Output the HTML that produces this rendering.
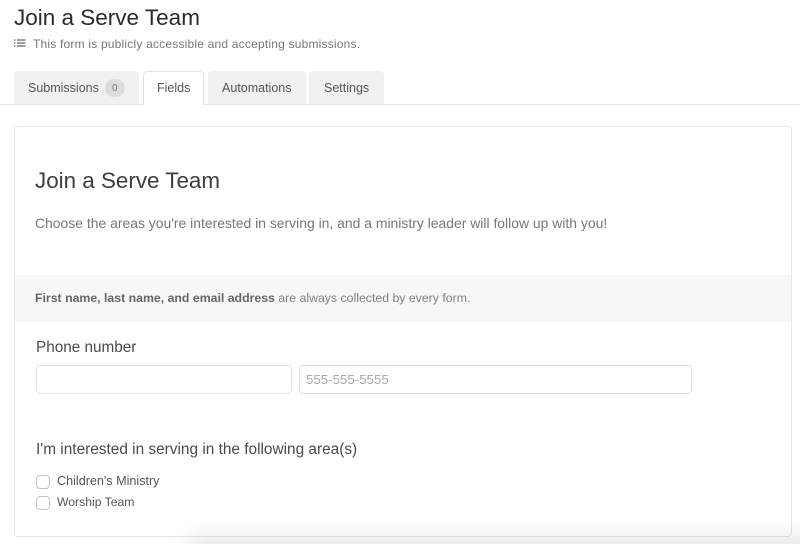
<!DOCTYPE html>
<html><head><meta charset="utf-8"><style>
html,body{margin:0;padding:0;background:#fff;overflow:hidden}
body{width:800px;height:544px}
#w{width:800px;height:544px;overflow:hidden;position:relative;font-family:"Liberation Sans",sans-serif}
.t{position:absolute;white-space:nowrap;line-height:1}
.b{position:absolute;box-sizing:border-box}
.tab{position:absolute;top:71px;height:33px;background:#f1f1f1;border-radius:4px 4px 0 0;box-sizing:border-box}
.tl{font-size:12.5px;color:#555}
</style></head><body><div id="w">
<div class="t" style="left:14px;top:7px;font-size:22.5px;color:#2b2b2b">Join a Serve Team</div>
<svg class="b" style="left:14px;top:39px" width="12" height="9" viewBox="0 0 12 9"><path d="M0 1h1.5M3 1h8.500M0 4h1.500M3 4h8.500M0 7h1.500M3 7h8.500" stroke="#666" stroke-width="1.200" fill="none"/></svg>
<div class="t" style="left:33px;top:38px;font-size:12px;letter-spacing:.2px;color:#777">This form is publicly accessible and accepting submissions.</div>
<div class="b" style="left:0;top:104px;width:800px;height:1px;background:#e4e4e4"></div>
<div class="tab" style="left:14px;width:125px"></div>
<div class="t tl" style="left:28px;top:82px">Submissions</div>
<div class="b" style="left:105px;top:79px;width:20px;height:18px;border-radius:9px;background:#dcdcdc"></div>
<div class="t" style="left:112px;top:84px;font-size:10px;color:#777">0</div>
<div class="tab" style="left:143px;width:61px;height:34px;background:#fff;border:1px solid #e4e4e4;border-bottom:0"></div>
<div class="t tl" style="left:157px;top:82px">Fields</div>
<div class="tab" style="left:208px;width:98px"></div>
<div class="t tl" style="left:222px;top:82px">Automations</div>
<div class="tab" style="left:309px;width:75px"></div>
<div class="t tl" style="left:324px;top:82px">Settings</div>
<div class="b" style="left:14px;top:126px;width:778px;height:411px;background:#fff;border:1px solid #e6e6e6;border-radius:4px"></div>
<div class="t" style="left:35px;top:170px;font-size:22.4px;color:#3d3d3d">Join a Serve Team</div>
<div class="t" style="left:35px;top:217px;font-size:13.93px;color:#777">Choose the areas you're interested in serving in, and a ministry leader will follow up with you!</div>
<div class="b" style="left:15px;top:275px;width:776px;height:47px;background:#f7f7f7"></div>
<div class="t" style="left:35px;top:292px;font-size:12.3px;color:#808080"><b style="color:#666">First name, last name, and email address</b> are always collected by every form.</div>
<div class="t" style="left:36px;top:340px;font-size:15.3px;color:#4a4a4a">Phone number</div>
<div class="b" style="left:36px;top:365px;width:256px;height:29px;border:1px solid #e2e2e2;border-radius:4px"></div>
<div class="b" style="left:299px;top:365px;width:393px;height:29px;border:1px solid #dedede;border-radius:4px"></div>
<div class="t" style="left:306px;top:373px;font-size:13.3px;color:#aaa">555-555-5555</div>
<div class="t" style="left:36px;top:442px;font-size:15.4px;color:#4a4a4a">I'm interested in serving in the following area(s)</div>
<div class="b" style="left:36px;top:475px;width:14px;height:14px;border:1px solid #c4c4c4;border-radius:4px"></div>
<div class="t" style="left:57px;top:475px;font-size:12.6px;color:#555">Children's Ministry</div>
<div class="b" style="left:36px;top:496px;width:14px;height:14px;border:1px solid #c4c4c4;border-radius:4px"></div>
<div class="t" style="left:57px;top:496px;font-size:12.2px;color:#555">Worship Team</div>
<div class="b" style="left:190px;top:537px;width:700px;height:30px;background:rgba(0,0,0,.1);filter:blur(11px)"></div>
</div></body></html>
